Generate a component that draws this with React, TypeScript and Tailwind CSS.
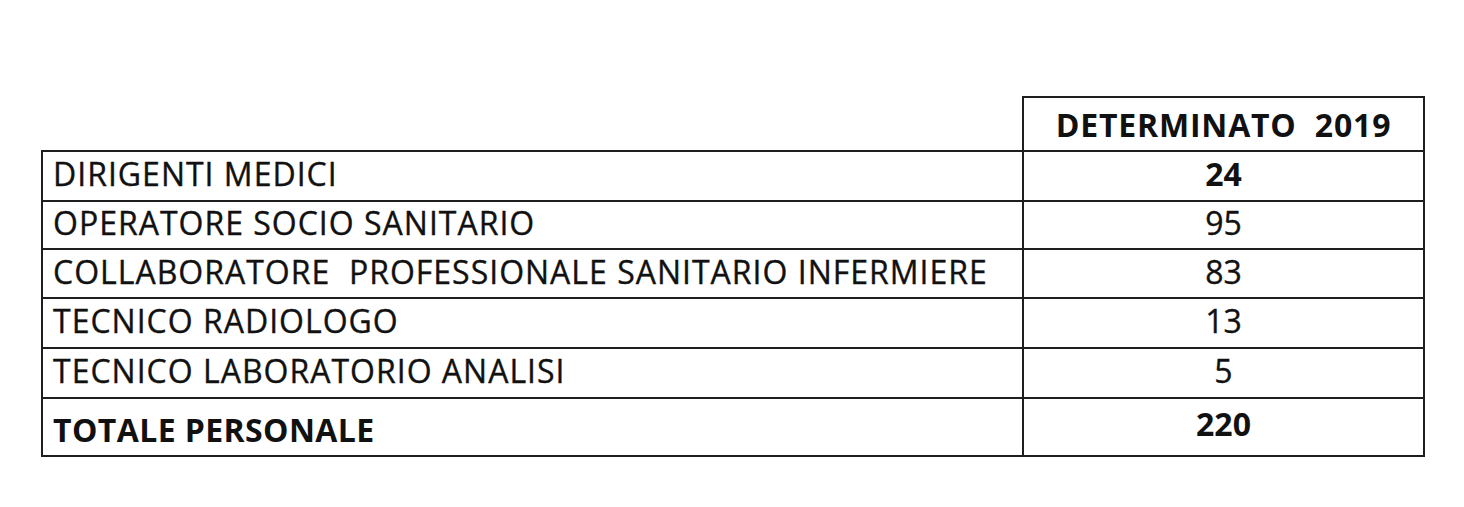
import React from "react";

const rows: { label: string; value: string; h: string }[] = [
  { label: "DIRIGENTI MEDICI", value: "24", h: "h-[50px]" },
  { label: "OPERATORE SOCIO SANITARIO", value: "95", h: "h-[48px]" },
  { label: "COLLABORATORE  PROFESSIONALE SANITARIO INFERMIERE", value: "83", h: "h-[49px]" },
  { label: "TECNICO RADIOLOGO", value: "13", h: "h-[50px]" },
  { label: "TECNICO LABORATORIO ANALISI", value: "5", h: "h-[50px]" },
];

export default function App() {
  return (
    <div className="w-[1464px] h-[507px] bg-white pt-[96px] pl-[41px] font-['Open_Sans',sans-serif] text-[#111111]">
      <table className="table-fixed border-collapse w-[1382px]">
        <colgroup>
          <col className="w-[981px]" />
          <col className="w-[401px]" />
        </colgroup>
        <thead>
          <tr className="h-[54px]">
            <th className="p-0"></th>
            <th className="border-2 border-[#1e1e1e] text-center text-[32px] font-bold tracking-[0.8px] whitespace-pre leading-none p-0 pt-[2px]">
              DETERMINATO  2019
            </th>
          </tr>
        </thead>
        <tbody>
          {rows.map((r, i) => (
            <tr key={i} className={r.h}>
              <td className="border-2 border-[#1e1e1e] pl-[10px] text-[32px] tracking-[1px] whitespace-pre leading-none p-0 pb-[4px] [-webkit-text-stroke:0.35px_#111111]">
                {r.label}
              </td>
              <td
                className={`border-2 border-[#1e1e1e] text-center text-[32px] leading-none p-0 pb-[4px] ${
                  i === 0 ? "font-bold" : "[-webkit-text-stroke:0.35px_#111111]"
                }`}
              >
                {r.value}
              </td>
            </tr>
          ))}
          <tr className="h-[58px]">
            <td className="border-2 border-[#1e1e1e] pl-[10px] pt-[6px] text-[32px] font-bold tracking-[0.4px] leading-none p-0">
              TOTALE PERSONALE
            </td>
            <td className="border-2 border-[#1e1e1e] text-center text-[32px] font-bold leading-none p-0 pb-[6px]">
              220
            </td>
          </tr>
        </tbody>
      </table>
    </div>
  );
}
